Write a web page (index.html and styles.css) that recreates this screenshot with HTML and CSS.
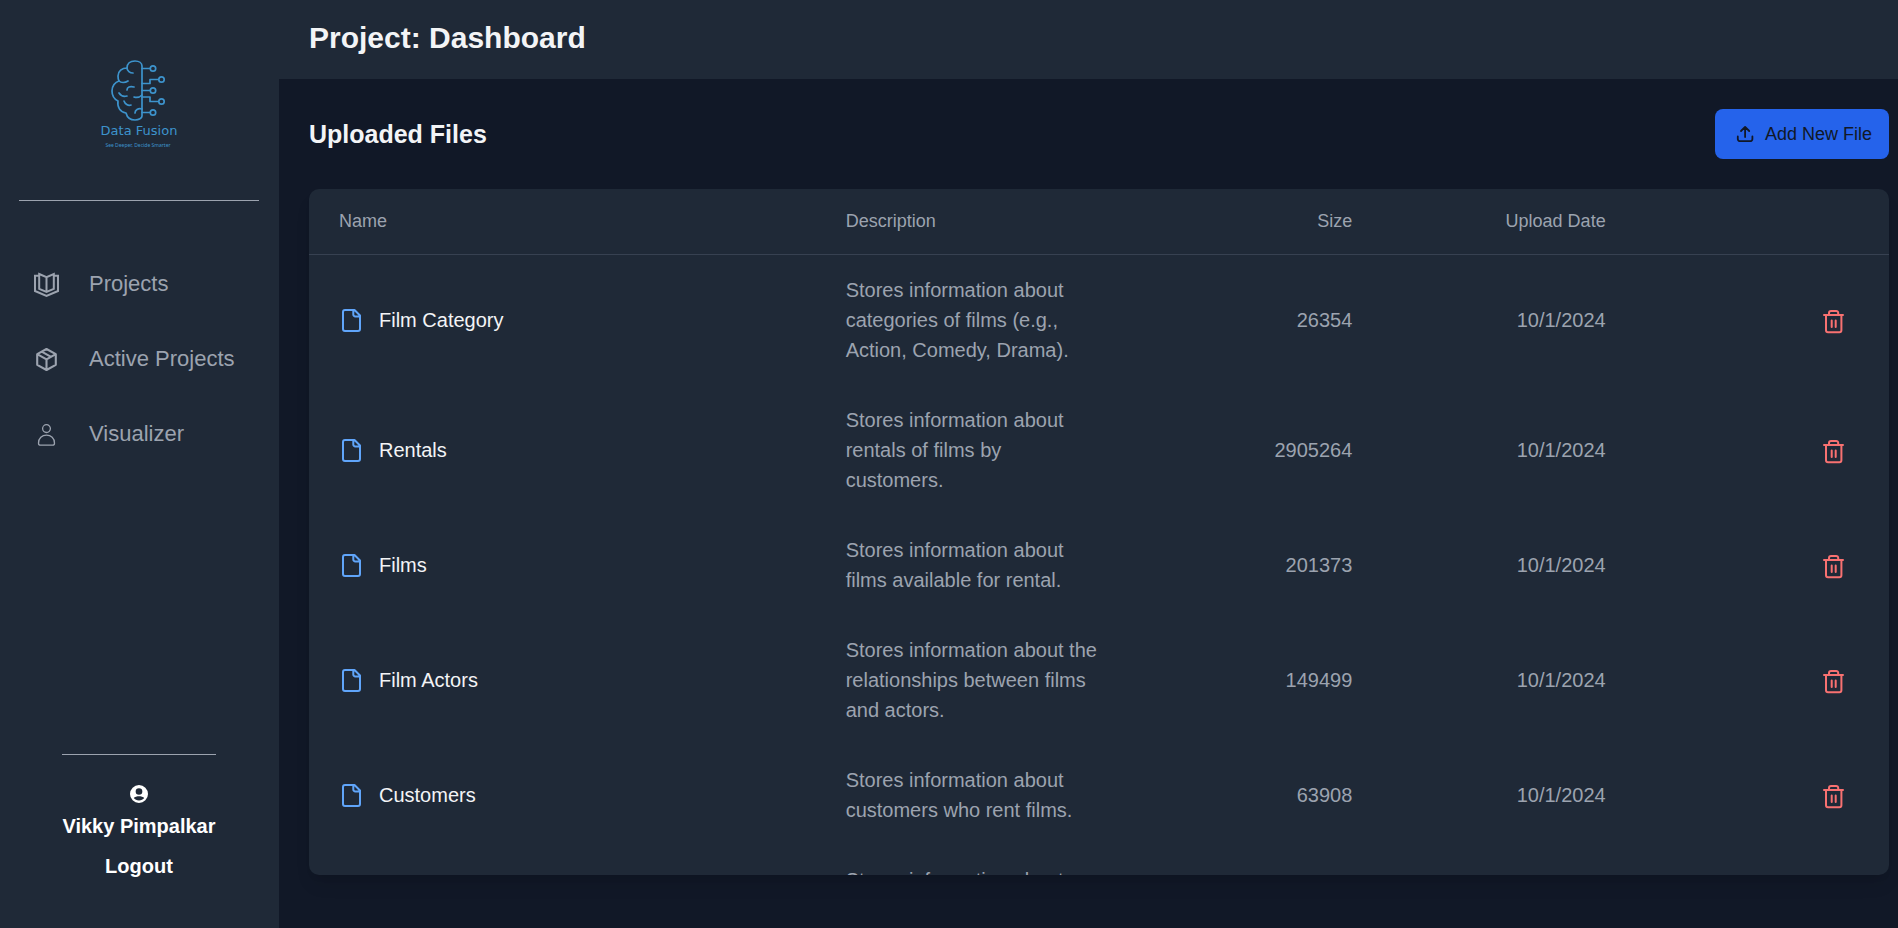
FILE: index.html
```html
<!DOCTYPE html>
<html lang="en">
<head>
<meta charset="utf-8">
<title>Project: Dashboard</title>
<link rel="stylesheet" href="styles.css">
</head>
<body>
<svg width="0" height="0" class="sprite" aria-hidden="true">
  <symbol id="file" viewBox="0 0 25 25"><path d="M6 2h9.500l5.500 5.500v13.500a2 2 0 0 1-2 2H6a2 2 0 0 1-2-2V4a2 2 0 0 1 2-2zM14.300 2.200v4.300a2 2 0 0 0 2 2h4.700"/></symbol>
  <symbol id="trash" viewBox="0 0 25 25"><path d="M3 6h19M5 6v15.200a2 2 0 0 0 2 2h11.400a2 2 0 0 0 2-2V6M8 6V3.900a2 2 0 0 1 2-2h5.200a2 2 0 0 1 2 2V6M10.700 11.500v6.500M14.700 11.500v6.500"/></symbol>
</svg>
<div class="app">
  <aside class="sidebar">
    <div class="brand">
      <svg class="logo" viewBox="0 0 120 120" role="img" aria-label="Data Fusion">
        <g fill="none" stroke="#3d93cc" stroke-width="1.700" stroke-linecap="round" stroke-linejoin="round">
          <path d="M63 76V26c0-3-3-5-7-5-5 0-8 3-8 7-5 0-9 3-9 8 0 2 0 3 1 5-4 1-7 5-7 10 0 4 2 8 6 10-1 6 2 11 8 12 1 4 4 7 9 7 4 0 7-2 7-4"/>
          <path d="M48 28c0 3 3 5 6 5M40 41c2 2 6 2 9 0M48 50c0-3 3-4 7-3M40 53c2 3 5 4 8 3M45 61c1 3 4 5 7 4M55 57c3 1 6 0 8-2M56 73c0-3 3-5 7-4"/>
          <path d="M63 28.500h8M63 43.500h8v-4h8M63 50.500h8M63 57h8v4.500h8M63 72.500h8"/>
          <circle cx="74" cy="28.500" r="2.700"/><circle cx="82.500" cy="39.500" r="2.700"/><circle cx="74" cy="50.500" r="2.700"/><circle cx="82.500" cy="61.500" r="2.700"/><circle cx="74" cy="72.500" r="2.700"/>
        </g>
        <text class="logo-name" x="60" y="95">Data Fusion</text>
        <text class="logo-tag" x="59" y="107">See Deeper, Decide Smarter</text>
      </svg>
    </div>
    <nav class="nav">
      <a class="nav-link" href="#projects">
        <svg class="nav-icon" viewBox="0 0 25 25"><path stroke-width="2" d="M5.200 2l7.300 3.200L19.800 2v14.800l-7.300 3.200-7.300-3.200zM12.500 5.200V20M5.200 3.800H1v15.200l11.500 4.800L24 19V3.800h-4.200"/></svg>
        Projects</a>
      <a class="nav-link" href="#active">
        <svg class="nav-icon" viewBox="0 0 25 25"><path stroke-width="2.100" stroke-linejoin="round" d="M12.500 2l9.300 5.200v10.600l-9.300 5.200-9.300-5.200V7.200zM3.200 7.200l9.300 5.200 9.300-5.200M12.500 12.400V23M7.700 4.700l9.300 5.200"/></svg>
        Active Projects</a>
      <a class="nav-link" href="#visualizer">
        <svg class="nav-icon" viewBox="0 0 25 25"><path stroke-width="1.300" d="M12.500 2.700a3.900 3.900 0 1 1 0 7.800 3.900 3.900 0 0 1 0-7.800zM6.500 23.200c-1.200 0-2-.8-2-2 0-5 3.500-8 8-8s8 3 8 8c0 1.200-.8 2-2 2z"/></svg>
        Visualizer</a>
    </nav>
    <div class="account">
      <svg class="avatar" viewBox="2 2 20 20" aria-hidden="true"><path fill="#fff" fill-rule="evenodd" d="M12 2a10 10 0 1 0 0 20 10 10 0 0 0 0-20zm0 3.500a3.700 3.700 0 1 1 0 7.400 3.700 3.700 0 0 1 0-7.400zm0 13.700c-2.400 0-4.500-1-5.800-2.700.8-1.300 3.800-2 5.800-2s5 .7 5.800 2c-1.300 1.700-3.400 2.700-5.800 2.700z"/></svg>
      <span class="user">Vikky Pimpalkar</span>
      <button class="logout" type="button">Logout</button>
    </div>
  </aside>
  <div class="page">
    <header class="topbar"><h1 class="title">Project: Dashboard</h1></header>
    <main class="content">
      <div class="toolbar">
        <h2 class="subtitle">Uploaded Files</h2>
        <button class="add" type="button">
          <svg class="add-icon" viewBox="0 0 20 20" aria-hidden="true"><path d="M2.800 12.500v2.400a2.300 2.300 0 0 0 2.300 2.300h10a2.300 2.300 0 0 0 2.300-2.300v-2.400M10.100 13V3M6 7L10.100 2.900 14.200 7"/></svg>
          Add New File
        </button>
      </div>
      <div class="card">
        <table class="files">
          <thead>
            <tr class="row head"><th>Name</th><th>Description</th><th class="num">Size</th><th class="num">Upload Date</th><th></th></tr>
          </thead>
          <tbody>
            <tr class="row"><td class="name"><svg class="icon"><use href="#file"/></svg>Film Category</td><td>Stores information about categories of films (e.g., Action, Comedy, Drama).</td><td class="num">26354</td><td class="num">10/1/2024</td><td class="num"><button class="delete" type="button" aria-label="Delete Film Category"><svg class="icon"><use href="#trash"/></svg></button></td></tr>
            <tr class="row"><td class="name"><svg class="icon"><use href="#file"/></svg>Rentals</td><td>Stores information about rentals of films by customers.</td><td class="num">2905264</td><td class="num">10/1/2024</td><td class="num"><button class="delete" type="button" aria-label="Delete Rentals"><svg class="icon"><use href="#trash"/></svg></button></td></tr>
            <tr class="row"><td class="name"><svg class="icon"><use href="#file"/></svg>Films</td><td>Stores information about films available for rental.</td><td class="num">201373</td><td class="num">10/1/2024</td><td class="num"><button class="delete" type="button" aria-label="Delete Films"><svg class="icon"><use href="#trash"/></svg></button></td></tr>
            <tr class="row"><td class="name"><svg class="icon"><use href="#file"/></svg>Film Actors</td><td>Stores information about the relationships between films and actors.</td><td class="num">149499</td><td class="num">10/1/2024</td><td class="num"><button class="delete" type="button" aria-label="Delete Film Actors"><svg class="icon"><use href="#trash"/></svg></button></td></tr>
            <tr class="row"><td class="name"><svg class="icon"><use href="#file"/></svg>Customers</td><td>Stores information about customers who rent films.</td><td class="num">63908</td><td class="num">10/1/2024</td><td class="num"><button class="delete" type="button" aria-label="Delete Customers"><svg class="icon"><use href="#trash"/></svg></button></td></tr>
            <tr class="row"><td></td><td>Stores information about</td><td></td><td></td><td></td></tr>
          </tbody>
        </table>
      </div>
    </main>
  </div>
</div>
</body>
</html>
```
FILE: styles.css
```css
* { box-sizing: border-box; }

body {
  margin: 0;
  background: #111827;
  color: #f3f4f6;
  font: 20px/30px "Liberation Sans", Arial, sans-serif;
}

button {
  border: 0;
  background: none;
  padding: 0;
  color: inherit;
  font: inherit;
  cursor: pointer;
}

svg { display: block; flex: none; }
.sprite { position: absolute; }

.app { display: flex; height: 100vh; }

.sidebar {
  display: flex;
  flex-direction: column;
  flex: none;
  width: 279px;
  padding: 40px 20px 47px 19px;
  background: #1f2937;
}

.brand {
  display: flex;
  justify-content: center;
  padding-bottom: 40px;
  border-bottom: 1px solid #9ca3af;
}
.logo { width: 120px; height: 120px; }
.logo-name, .logo-tag { fill: #3d93cc; text-anchor: middle; }
.logo-name { font: 13px "DejaVu Sans", sans-serif; }
.logo-tag { font: 5px "Noto Sans", sans-serif; }

.nav {
  display: flex;
  flex-direction: column;
  gap: 45px;
  padding: 68px 0 0 15px;
}
.nav-link {
  display: flex;
  align-items: center;
  gap: 30px;
  color: #9ca3af;
  font-size: 22px;
  text-decoration: none;
  white-space: nowrap;
}
.nav-icon { width: 25px; height: 25px; fill: none; stroke: currentColor; }

.account {
  display: flex;
  flex-direction: column;
  align-items: center;
  align-self: center;
  margin-top: auto;
  padding-top: 30px;
  border-top: 1px solid #9ca3af;
  color: #fff;
  font-weight: bold;
}
.avatar { width: 18px; height: 18px; margin-bottom: 8px; }
.logout { margin-top: 10px; font-weight: bold; }

.page { display: flex; flex-direction: column; flex: 1; min-width: 0; }

.topbar { padding: 20px 30px 23px; background: #1f2937; }
.title { margin: 0; font-size: 30px; line-height: 36px; }

.content {
  display: flex;
  flex-direction: column;
  gap: 30px;
  flex: 1;
  min-height: 0;
  padding: 30px 9px 53px 30px;
}

.toolbar { display: flex; justify-content: space-between; align-items: center; }
.subtitle { margin: 0; font-size: 25px; }
.add {
  display: flex;
  align-items: center;
  gap: 10px;
  height: 50px;
  padding: 0 17px 0 20px;
  border-radius: 8px;
  background: #2563eb;
  color: #111827;
  font-size: 18px;
}
.add-icon {
  width: 20px;
  height: 20px;
  fill: none;
  stroke: currentColor;
  stroke-width: 1.800;
  stroke-linecap: round;
  stroke-linejoin: round;
}

.card {
  flex: 1;
  min-height: 0;
  overflow: hidden;
  border-radius: 10px;
  background: #1f2937;
  box-shadow: 0 12px 18px -4px rgba(0, 0, 0, 0.1), 0 5px 8px -5px rgba(0, 0, 0, 0.1);
}
.files, .files thead, .files tbody { display: block; }
.row {
  display: grid;
  grid-template-columns: 4fr 2fr 2fr 2fr 2fr;
  align-items: center;
  padding: 20px 30px;
}
.row th, .row td { min-width: 0; padding: 0; color: #9ca3af; text-align: left; }
.head { border-bottom: 1px solid #374151; }
.head th { font-size: 18px; line-height: 25px; font-weight: normal; }
.row .num { text-align: right; }
.row .name { display: flex; align-items: center; gap: 15px; color: #f3f4f6; }

.icon {
  width: 25px;
  height: 25px;
  fill: none;
  stroke: #60a5fa;
  stroke-width: 2;
  stroke-linecap: round;
  stroke-linejoin: round;
}
.delete { padding: 0 13px; vertical-align: middle; }
.delete .icon { stroke: #f87171; }
```
